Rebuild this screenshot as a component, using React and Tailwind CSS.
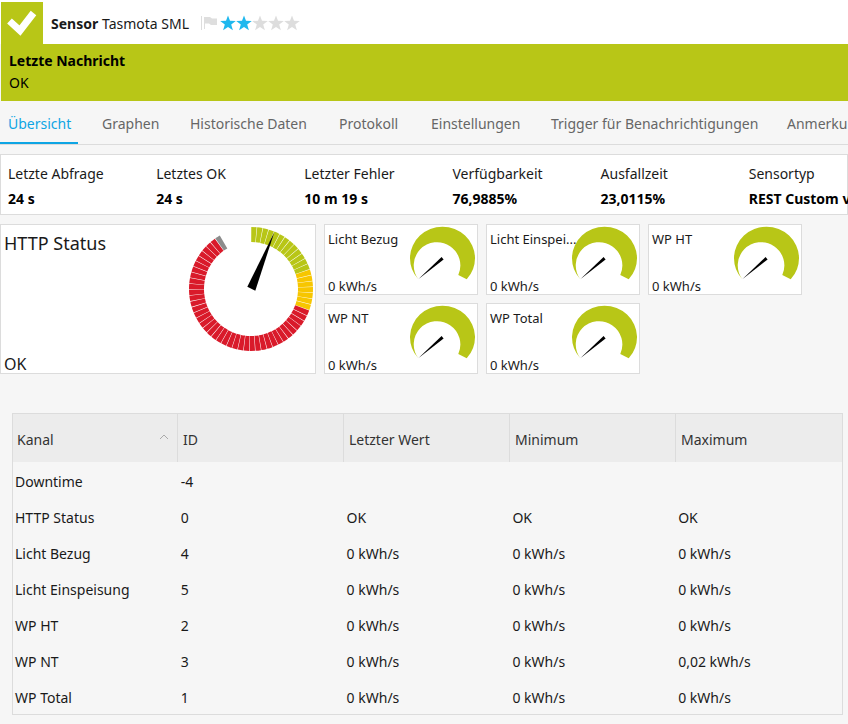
const GREEN = '#b8c617'

const tabs = [
  ['Übersicht', 'w-[94px]'],
  ['Graphen', 'w-[88px]'],
  ['Historische Daten', 'w-[149px]'],
  ['Protokoll', 'w-[92px]'],
  ['Einstellungen', 'w-[120px]'],
  ['Trigger für Benachrichtigungen', 'w-[236px]'],
  ['Anmerkungen', 'w-[100px]'],
]

const stats = [
  ['Letzte Abfrage', '24 s'],
  ['Letztes OK', '24 s'],
  ['Letzter Fehler', '10 m 19 s'],
  ['Verfügbarkeit', '76,9885%'],
  ['Ausfallzeit', '23,0115%'],
  ['Sensortyp', 'REST Custom v2'],
]

const rows = [
  ['Downtime', '-4', '', '', ''],
  ['HTTP Status', '0', 'OK', 'OK', 'OK'],
  ['Licht Bezug', '4', '0 kWh/s', '0 kWh/s', '0 kWh/s'],
  ['Licht Einspeisung', '5', '0 kWh/s', '0 kWh/s', '0 kWh/s'],
  ['WP HT', '2', '0 kWh/s', '0 kWh/s', '0 kWh/s'],
  ['WP NT', '3', '0 kWh/s', '0 kWh/s', '0,02 kWh/s'],
  ['WP Total', '1', '0 kWh/s', '0 kWh/s', '0 kWh/s'],
]

function Star({ color }) {
  return (
    <svg width="16" height="16" viewBox="0 0 16 16">
      <polygon
        fill={color}
        points="8,0.5 10,5.8 15.8,6 11.2,9.5 12.9,15.2 8,11.9 3.1,15.2 4.8,9.5 0.2,6 6,5.8"
      />
    </svg>
  )
}

function segColor(deg) {
  if (deg < 68) return GREEN
  if (deg < 109) return '#f7c600'
  if (deg < 323) return '#d91a2a'
  return '#8c8c8c'
}

function BigGauge() {
  const segs = []
  const cx = 64
  const cy = 64
  for (let deg = 0; deg < 330; deg += 5.5) {
    const a = ((deg + 0.25) * Math.PI) / 180
    const b = ((deg + 5.25) * Math.PI) / 180
    const p = (r, t) => `${(cx + r * Math.sin(t)).toFixed(2)} ${(cy - r * Math.cos(t)).toFixed(2)}`
    segs.push(
      <path
        key={deg}
        fill={segColor(deg)}
        d={`M${p(47, a)} L${p(62, a)} A62 62 0 0 1 ${p(62, b)} L${p(47, b)} A47 47 0 0 0 ${p(47, a)}Z`}
      />
    )
  }
  return (
    <svg width="128" height="128" viewBox="0 0 128 128" className="absolute left-[185.5px] top-[0px]">
      {segs}
      <polygon points="60.3,61.7 68.3,65.7 87.3,7.3" fill="#000" />
    </svg>
  )
}

function SmallGauge() {
  return (
    <svg width="70" height="60" viewBox="0 0 70 60" className="absolute left-[83px] top-[1px]">
      <path
        fill={GREEN}
        d="M10.3 53.3 A32.5 31.5 0 1 1 58.7 53.3 L50.3 49 A23.3 23.3 0 1 0 10.3 53.3Z"
      />
      <polygon points="10.3,53.3 33.6,31 35.6,33.4" fill="#000" />
    </svg>
  )
}

function SmallCard({ title }) {
  return (
    <div className="relative w-[154px] h-[71px] bg-white border border-[#dcdcdc]">
      <div className="absolute left-[3px] top-[5px] text-[13px] leading-[18px]">{title}</div>
      <div className="absolute left-[3px] bottom-[-1px] text-[13px] leading-[18px]">0 kWh/s</div>
      <SmallGauge />
    </div>
  )
}

export default function App() {
  return (
    <div className="relative w-[848px] h-[724px] overflow-hidden bg-[#f6f6f6] text-[#1a1a1a] font-['Open_Sans','Noto_Sans',sans-serif]">
      <div className="flex items-end h-[44px] bg-white pl-[1px]">
        <div className="flex items-center justify-center w-[42px] h-[42px] bg-[#b8c617]">
          <svg width="34" height="28" viewBox="0 0 34 28">
            <polyline points="4.5,12 15,21.5 28.5,4" fill="none" stroke="#fff" strokeWidth="7" />
          </svg>
        </div>
        <div className="flex items-center h-[42px] ml-[8px] text-[14px] whitespace-nowrap">
          <b className="w-[51px]">Sensor</b>
          <span className="w-[99px]">Tasmota SML</span>
          <svg width="18" height="16" viewBox="0 0 18 16" className="mr-[1px]">
            <rect x="0" y="1" width="1" height="14" fill="#ddd" />
            <path d="M3 2 L9 2 L11 3.5 L16 3.5 L16 10 L10 10 L8 8.5 L4 8.5 L4 14 L3 14Z" fill="#dedede" />
          </svg>
          <Star color="#1fb8ee" />
          <Star color="#1fb8ee" />
          <Star color="#dddddd" />
          <Star color="#dddddd" />
          <Star color="#dddddd" />
        </div>
      </div>

      <div className="h-[57px] ml-[1px] bg-[#b8c617] pl-[8px] pt-[6px] text-[14px] text-black">
        <div className="font-bold leading-[21px]">Letzte Nachricht</div>
        <div className="leading-[24px]">OK</div>
      </div>

      <div className="relative flex h-[44px] pl-[8px] border-b border-[#dcdcdc] text-[14px] text-[#666] whitespace-nowrap">
        {tabs.map(([name, w], i) => (
          <div key={name} className={`${w} shrink-0 leading-[46px] ${i === 0 ? 'text-[#0ea5e4]' : ''}`}>
            {name}
          </div>
        ))}
        <div className="absolute left-0 bottom-[0px] w-[78px] h-[2px] bg-[#0ea5e4]" />
      </div>

      <div className="flex mt-[9px] h-[61px] bg-white border border-[#dcdcdc] pl-[7px] pt-[8px] text-[14px] whitespace-nowrap">
        {stats.map(([label, value]) => (
          <div key={label} className="w-[148.15px] shrink-0">
            <div className="leading-[21px]">{label}</div>
            <div className="mt-[4px] font-bold leading-[21px] text-black">{value}</div>
          </div>
        ))}
      </div>

      <div className="flex gap-[8px] mt-[9px]">
        <div className="relative w-[316px] h-[150px] bg-white border border-[#dcdcdc]">
          <div className="absolute left-[3px] top-[5px] text-[18px] leading-[26px]">HTTP Status</div>
          <div className="absolute left-[3px] bottom-[-1px] text-[16px] leading-[20px]">OK</div>
          <BigGauge />
        </div>
        <div className="grid grid-cols-[154px_154px_154px] gap-[8px] content-start">
          <SmallCard title="Licht Bezug" />
          <SmallCard title="Licht Einspei..." />
          <SmallCard title="WP HT" />
          <SmallCard title="WP NT" />
          <SmallCard title="WP Total" />
        </div>
      </div>

      <div className="absolute left-[12px] top-[413px] w-[831px] h-[302px] border border-[#dcdcdc] text-[14px] whitespace-nowrap">
        <div className="flex h-[48px] bg-[#ececec] text-[#333]">
          {['Kanal', 'ID', 'Letzter Wert', 'Minimum', 'Maximum'].map((h, i) => (
            <div
              key={h}
              className={`relative leading-[52px] border-r border-[#dcdcdc] last:border-r-0 ${i === 0 ? 'w-[165px] pl-[4px]' : 'w-[166px] pl-[5px]'}`}
            >
              {h}
              {i === 0 && (
                <svg width="10" height="6" viewBox="0 0 10 6" className="absolute left-[146px] top-[20px]">
                  <polyline points="1,5 5,1 9,5" fill="none" stroke="#aaa" strokeWidth="1" />
                </svg>
              )}
            </div>
          ))}
        </div>
        {rows.map((r) => (
          <div key={r[0]} className="flex h-[36px] leading-[40px]">
            {r.map((cell, i) => (
              <div key={i} className="w-[166px] pl-[2px]">
                {cell}
              </div>
            ))}
          </div>
        ))}
      </div>
    </div>
  )
}
